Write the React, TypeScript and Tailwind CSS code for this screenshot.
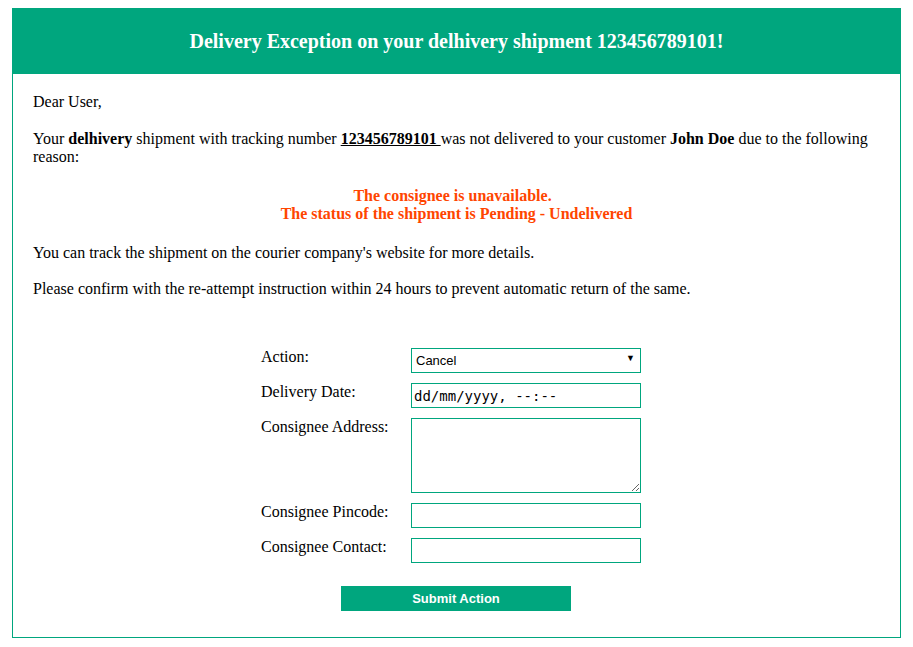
import React from "react";

const fields = [
  { label: "Consignee Pincode:", key: "pincode" },
  { label: "Consignee Contact:", key: "contact" },
];

const inputBox =
  "w-[230px] h-[25px] border border-[#00a67e] bg-white outline-none";

export default function App() {
  return (
    <div className="bg-white min-h-[647px] pt-2 font-['Liberation_Serif',serif] text-[16px] text-black">
      <div className="ml-[12px] w-[889px] border border-[#00a67e]">
        {/* header */}
        <div className="-mx-px -mt-px h-[66px] bg-[#00a67e] flex items-center justify-center">
          <h2 className="text-white text-[20px] font-bold leading-none">
            Delivery Exception on your delhivery shipment 123456789101!
          </h2>
        </div>

        <div className="px-[20px] pt-[19px] pb-[26px]">
          <p className="leading-[18px] mb-[19px]">Dear User,</p>
          <p className="leading-[18px]">
            Your <b>delhivery</b> shipment with tracking number{" "}
            <b className="underline">123456789101 </b>was not delivered to your
            customer <b>John Doe</b> due to the following reason:
          </p>

          <h4 className="my-[21px] text-center font-bold leading-[18px] text-[#ff4500]">
            The consignee is unavailable.&nbsp;&nbsp;
            <br />
            The status of the shipment is Pending - Undelivered
          </h4>

          <p className="leading-[18px] mb-[18px]">
            You can track the shipment on the courier company's website for more details.
          </p>
          <p className="leading-[18px]">
            Please confirm with the re-attempt instruction within 24 hours to prevent automatic return of the same.
          </p>

          {/* form */}
          <div className="mt-[50px] flex justify-center">
            <div className="w-[391px] pr-[11px] grid grid-cols-[150px_230px] gap-y-[10px] leading-[18px]">
              <div>Action:</div>
              <div className="relative w-[230px] h-[25px]">
                <select
                  className={`${inputBox} appearance-none pl-[4px] pt-[1px] font-['Liberation_Sans',sans-serif] text-[13px]`}
                  defaultValue="cancel"
                >
                  <option value="cancel">Cancel</option>
                  <option value="reattempt">Re-attempt</option>
                </select>
                <span className="pointer-events-none absolute right-[6px] top-[6px] text-[9px] leading-none">
                  ▼
                </span>
              </div>

              <div>Delivery Date:</div>
              <input
                type="text"
                readOnly
                defaultValue="dd/mm/yyyy, --:--"
                className={`${inputBox} pl-[2px] font-['DejaVu_Sans_Mono',monospace] text-[14px] text-black`}
              />

              <div>Consignee Address:</div>
              <textarea className="w-[230px] h-[75px] border border-[#00a67e] bg-white outline-none block" />

              {fields.map((f) => (
                <React.Fragment key={f.key}>
                  <div>{f.label}</div>
                  <input type="text" className={inputBox} />
                </React.Fragment>
              ))}
            </div>
          </div>

          <div className="mt-[23px] flex justify-center pr-px">
            <button className="w-[230px] h-[25px] bg-[#00a67e] text-white font-bold text-[13px] font-['Liberation_Sans',sans-serif]">
              Submit Action
            </button>
          </div>
        </div>
      </div>
    </div>
  );
}
